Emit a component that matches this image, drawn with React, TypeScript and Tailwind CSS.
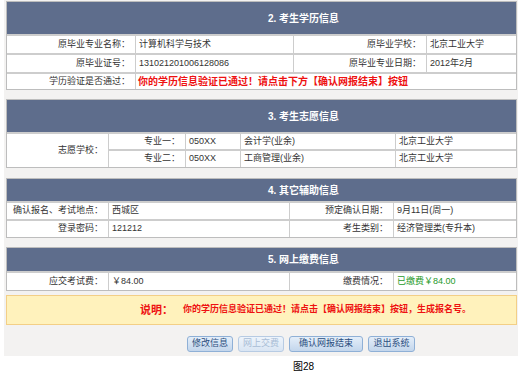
const font = "font-['Liberation_Sans','Noto_Sans_CJK_SC',sans-serif]";

function Header({ title, h }: { title: string; h: string }) {
  return (
    <div
      className={`${h} flex items-center bg-[#5e6d8c] pl-[261px] text-[10px] font-bold text-white`}
    >
      {title}
    </div>
  );
}

function Label({ children, className = "" }: { children: React.ReactNode; className?: string }) {
  return (
    <div className={`flex items-center justify-end pr-[5px] text-[9px] text-[#333] ${className}`}>
      {children}
    </div>
  );
}

function Value({
  children,
  className = "",
  color = "text-[#333]",
}: {
  children: React.ReactNode;
  className?: string;
  color?: string;
}) {
  return (
    <div className={`flex items-center pl-[3px] text-[9px] ${color} ${className}`}>
      {children}
    </div>
  );
}

const line = "border-t-2 border-[#cdcdcd]";
const vline = "border-l border-[#b9b9b9]";

export default function App() {
  return (
    <div className={`${font} w-[518px] bg-white`}>
      <div className="ml-[4px] flex flex-col bg-[#f3f2f1] pb-[4px] pl-[2px] pr-[1px] pt-[1px]">
        {/* 2. 考生学历信息 */}
        <div className="border border-[#bdbdbd] bg-white">
          <Header title="2. 考生学历信息" h="h-[32px]" />
          <div className="grid grid-cols-[128px_158px_133px_1fr]">
            <Label className={`h-[19px] ${line}`}>原毕业专业名称：</Label>
            <Value className={`${line} ${vline}`}>计算机科学与技术</Value>
            <Label className={`${line} ${vline}`}>原毕业学校：</Label>
            <Value className={`${line} ${vline}`}>北京工业大学</Value>

            <Label className={`h-[19px] ${line}`}>原毕业证号：</Label>
            <Value className={`${line} ${vline} text-[8px]`}>131021201006128086</Value>
            <Label className={`${line} ${vline}`}>原毕业专业日期：</Label>
            <Value className={`${line} ${vline} text-[8px]`}>2012年2月</Value>

            <Label className={`h-[17px] ${line}`}>学历验证是否通过：</Label>
            <div className={`col-span-3 flex items-center pl-[2px] text-[10px] font-bold text-[#ee1111] ${line} ${vline}`}>
              你的学历信息验证已通过！请点击下方【确认网报结束】按钮
            </div>
          </div>
        </div>

        {/* 3. 考生志愿信息 */}
        <div className="mt-[9px] border border-[#bdbdbd] bg-white">
          <Header title="3. 考生志愿信息" h="h-[32px]" />
          <div className="grid grid-cols-[101px_77px_55px_155px_1fr]">
            <Label className={`row-span-2 ${line}`}>志愿学校：</Label>
            <Label className={`h-[17px] ${line} ${vline}`}>专业一：</Label>
            <Value className={`${line} ${vline} text-[8px]`}>050XX</Value>
            <Value className={`${line} ${vline}`}>会计学(业余)</Value>
            <Value className={`${line} ${vline}`}>北京工业大学</Value>

            <Label className={`h-[18px] ${line} ${vline}`}>专业二：</Label>
            <Value className={`${line} ${vline} text-[8px]`}>050XX</Value>
            <Value className={`${line} ${vline}`}>工商管理(业余)</Value>
            <Value className={`${line} ${vline}`}>北京工业大学</Value>
          </div>
        </div>

        {/* 4. 其它辅助信息 */}
        <div className="mt-[10px] border border-[#bdbdbd] bg-white">
          <Header title="4. 其它辅助信息" h="h-[22px]" />
          <div className="grid grid-cols-[101px_181px_104px_1fr]">
            <Label className={`h-[18px] ${line}`}>确认报名、考试地点：</Label>
            <Value className={`${line} ${vline}`}>西城区</Value>
            <Label className={`${line} ${vline}`}>预定确认日期：</Label>
            <Value className={`${line} ${vline}`}>9月11日(周一)</Value>

            <Label className={`h-[18px] ${line}`}>登录密码：</Label>
            <Value className={`${line} ${vline} text-[8px]`}>121212</Value>
            <Label className={`${line} ${vline}`}>考生类别：</Label>
            <Value className={`${line} ${vline}`}>经济管理类(专升本)</Value>
          </div>
        </div>

        {/* 5. 网上缴费信息 */}
        <div className="mt-[9px] border border-[#bdbdbd] bg-white">
          <Header title="5. 网上缴费信息" h="h-[23px]" />
          <div className="grid grid-cols-[101px_181px_104px_1fr]">
            <Label className={`h-[19px] ${line}`}>应交考试费：</Label>
            <Value className={`${line} ${vline}`}>￥84.00</Value>
            <Label className={`${line} ${vline}`}>缴费情况：</Label>
            <Value className={`${line} ${vline}`} color="text-[#1f9a2a]">
              已缴费￥84.00
            </Value>
          </div>
        </div>

        {/* 说明 */}
        <div className="mt-[4px] flex h-[30px] items-center border border-[#f3cf86] bg-[#fff2bc] pl-[133px] font-bold text-[#ee1111]">
          <span className="text-[11px]">说明：</span>
          <span className="ml-[10px] text-[9px]">
            你的学历信息验证已通过！请点击【确认网报结束】按钮，生成报名号。
          </span>
        </div>

        {/* 按钮 */}
        <div className="mt-[11px] flex gap-[5px] pl-[181px]">
          <button className="h-[16px] w-[46px] rounded-[3px] border border-[#8fb0d6] bg-gradient-to-b from-[#e4eef9] to-[#c3d6ec] text-[9px] text-[#2c4f7f]">
            修改信息
          </button>
          <button className="h-[16px] w-[46px] rounded-[3px] border border-[#b7cbe3] bg-gradient-to-b from-[#eef4fb] to-[#d9e5f3] text-[9px] text-[#a9bdd6]">
            网上交费
          </button>
          <button className="h-[16px] w-[74px] rounded-[3px] border border-[#8fb0d6] bg-gradient-to-b from-[#e4eef9] to-[#c3d6ec] text-[9px] text-[#2c4f7f]">
            确认网报结束
          </button>
          <button className="h-[16px] w-[47px] rounded-[3px] border border-[#8fb0d6] bg-gradient-to-b from-[#e4eef9] to-[#c3d6ec] text-[9px] text-[#2c4f7f]">
            退出系统
          </button>
        </div>
      </div>
      <div className="flex h-[20px] items-center pl-[293px] text-[10px] text-black">图28</div>
    </div>
  );
}
